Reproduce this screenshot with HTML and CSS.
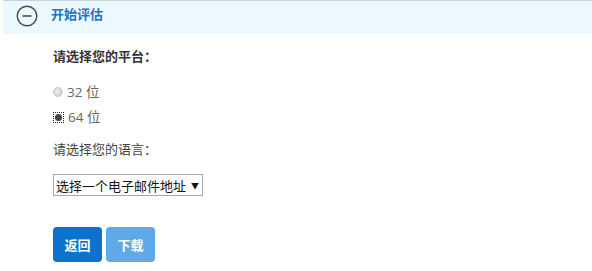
FILE: index.html
```html
<!DOCTYPE html>
<html lang="zh">
<head>
<meta charset="utf-8">
<link rel="stylesheet" href="styles.css">
</head>
<body>
<div class="header">
  <svg class="toggle" width="22" height="22" viewBox="0 0 22 22"><circle cx="11" cy="11" r="9.8" fill="none" stroke="#4a4a4a" stroke-width="1.4"/><line x1="6.5" y1="11" x2="15.5" y2="11" stroke="#4a4a4a" stroke-width="1.6"/></svg>
  <span class="title">开始评估</span>
</div>
<div class="content">
  <div class="label bold">请选择您的平台：</div>
  <div class="options">
    <div class="opt"><span class="radio"></span><span>32 位</span></div>
    <div class="opt"><span class="radio checked"><span class="dot"></span></span><span>64 位</span></div>
  </div>
  <div class="label lang">请选择您的语言：</div>
  <div class="select"><span>选择一个电子邮件地址</span><span class="arrow">▼</span></div>
  <div class="buttons">
    <button class="btn primary">返回</button>
    <button class="btn disabled">下载</button>
  </div>
</div>
</body>
</html>
```
FILE: styles.css
```css
html, body { margin: 0; padding: 0; background: #fff; }
body { font-family: "Open Sans", "Noto Sans CJK SC", sans-serif; font-size: 13px; color: #333; }
.header {
  margin: 0 0 0 3px;
  border-top: 1px solid #c9d2dc;
  background: #ebf8ff;
  height: 33px;
  display: flex;
  align-items: flex-start;
  gap: 13px;
  padding-left: 13px;
}
.header .toggle { margin-top: 4px; }
.title { color: #1d72c2; font-weight: bold; font-size: 13px; line-height: 18px; margin-top: 4px; font-family: "Noto Sans CJK SC", sans-serif; }
.content { padding-left: 53px; }
.label { font-family: "Noto Sans CJK SC", sans-serif; font-size: 13px; color: #333; line-height: 18px; }
.bold { font-weight: bold; margin-top: 13px; }
.options { margin-top: 18px; display: flex; flex-direction: column; gap: 7px; }
.opt { display: flex; align-items: center; gap: 4px; color: #666; line-height: 18px; font-size: 13.5px; }
.radio { width: 10px; height: 10px; border-radius: 50%; background: radial-gradient(circle at 40% 40%, #eee, #c4c4c4); border: 1px solid #c8c8c8; box-sizing: border-box; display: inline-block; }
.radio.checked { border-radius: 0; border: 1px dotted #222; width: 11px; height: 11px; background: #fff; display: inline-flex; align-items: center; justify-content: center; }
.dot { width: 7px; height: 7px; border-radius: 50%; background: #444; }
.lang { margin-top: 14px; color: #444; }
.select {
  margin-top: 16px;
  width: 150px; height: 22px; box-sizing: border-box;
  border: 1px solid #a9a9a9;
  display: flex; align-items: center; justify-content: space-between;
  padding: 0 3px 0 2px;
  font-family: "Noto Sans CJK SC", sans-serif; color: #111; font-size: 13px;
}
.arrow { font-size: 8px; }
.buttons { margin-top: 31px; display: flex; gap: 4px; }
.btn {
  width: 49px; height: 35px; border: none; border-radius: 4px;
  color: #fff; font-weight: bold; font-size: 13px;
  font-family: "Noto Sans CJK SC", sans-serif; padding: 0;
}
.primary { background: #0b73cd; }
.disabled { background: #5fa9e6; }
```
